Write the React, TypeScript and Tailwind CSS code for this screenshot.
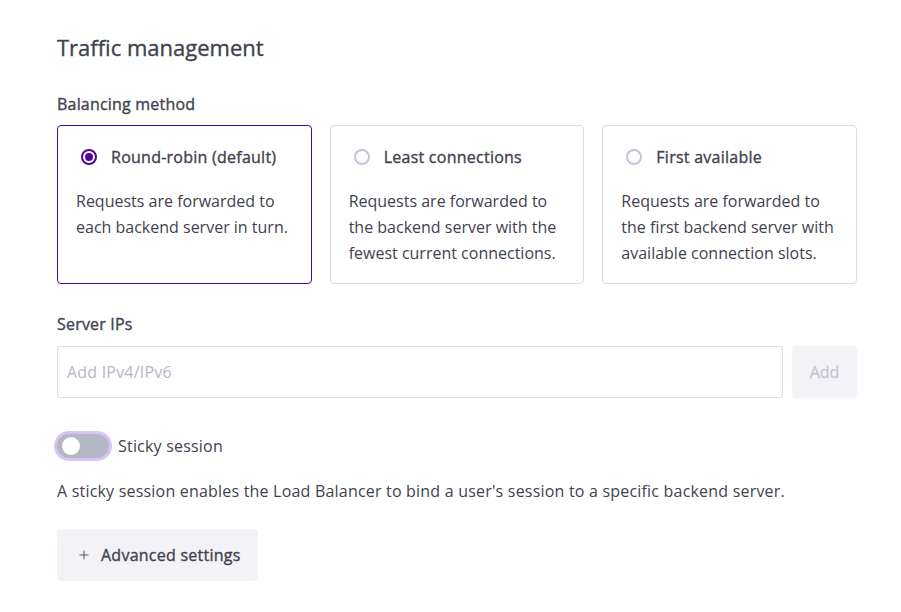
import { Plus } from 'lucide-react'

const methods = [
  {
    id: 'roundrobin',
    label: 'Round-robin (default)',
    text: 'Requests are forwarded to each backend server in turn.',
  },
  {
    id: 'leastconn',
    label: 'Least connections',
    text: 'Requests are forwarded to the backend server with the fewest current connections.',
  },
  {
    id: 'first',
    label: 'First available',
    text: 'Requests are forwarded to the first backend server with available connection slots.',
  },
]

function Radio({ checked }: { checked: boolean }) {
  return checked ? (
    <span className="flex h-4 w-4 shrink-0 items-center justify-center rounded-full border-2 border-[#4f0599]">
      <span className="h-2 w-2 rounded-full bg-[#4f0599]" />
    </span>
  ) : (
    <span className="h-4 w-4 shrink-0 rounded-full border-2 border-[#c4c6d3]" />
  )
}

// Open Sans has no 500 here, so a thin stroke stands in for the medium weight
const medium = 'font-medium [-webkit-text-stroke:0.35px_currentColor]'

export default function App() {
  const selected = 'roundrobin'
  return (
    <div
      className="min-h-[612px] bg-white px-[57px] pt-[31px] text-[#3f4250]"
      style={{ fontFamily: '"Open Sans", Lato, sans-serif' }}
    >
      <div className="w-[800px]">
        <h2 className={`text-[22px] leading-8 ${medium}`}>Traffic management</h2>

        <p className={`mt-[29px] text-base leading-6 tracking-[0.2px] ${medium}`}>Balancing method</p>
        <div className="mt-[9px] grid grid-cols-3 gap-[18px]">
          {methods.map((m) => {
            const on = m.id === selected
            return (
              <div
                key={m.id}
                className={
                  on
                    ? 'h-[159px] rounded border border-[#4f0599] px-[18px] pt-[19px]'
                    : 'h-[159px] rounded border border-[#d9dae6] px-[18px] pt-[19px]'
                }
              >
                <div className="flex items-center gap-[14px] pl-[5px]">
                  <Radio checked={on} />
                  <span className={`text-base leading-6 tracking-[0.25px] ${medium}`}>{m.label}</span>
                </div>
                <p className="mt-[19px] text-base leading-[26px]">{m.text}</p>
              </div>
            )
          })}
        </div>

        <p className={`mt-[28px] text-base leading-6 tracking-[0.2px] ${medium}`}>Server IPs</p>
        <div className="mt-[10px] flex gap-[9px]">
          <input
            className="h-[52px] flex-1 rounded border border-[#d9dae6] px-[9px] text-base tracking-[0.2px] text-[#3f4250] outline-none placeholder:text-[#b5b7c6]"
            placeholder="Add IPv4/IPv6"
          />
          <button
            type="button"
            className={`h-[52px] w-[65px] rounded bg-[#f3f3f7] text-base text-[#c5c7d4] ${medium}`}
          >
            Add
          </button>
        </div>

        <div className="mt-[36px] flex items-center gap-[9px]">
          <span className="relative h-6 w-[52px] rounded-full bg-[#b5b7c6] ring-[3px] ring-[#d9c4f3]">
            <span className="absolute left-[5px] top-[3px] h-[18px] w-[18px] rounded-full bg-white" />
          </span>
          <span className="text-base leading-6 tracking-[0.2px]">Sticky session</span>
        </div>
        <p className="mt-[21px] text-base leading-6 tracking-[0.2px]">
          A sticky session enables the Load Balancer to bind a user's session to a specific backend server.
        </p>

        <button
          type="button"
          className={`mt-[26px] flex h-[52px] items-center gap-[10px] rounded bg-[#f3f3f7] pl-[20px] pr-[17px] text-base tracking-[0.25px] ${medium}`}
        >
          <Plus className="h-[14px] w-[14px]" strokeWidth={1.5} aria-hidden />
          Advanced settings
        </button>
      </div>
    </div>
  )
}
